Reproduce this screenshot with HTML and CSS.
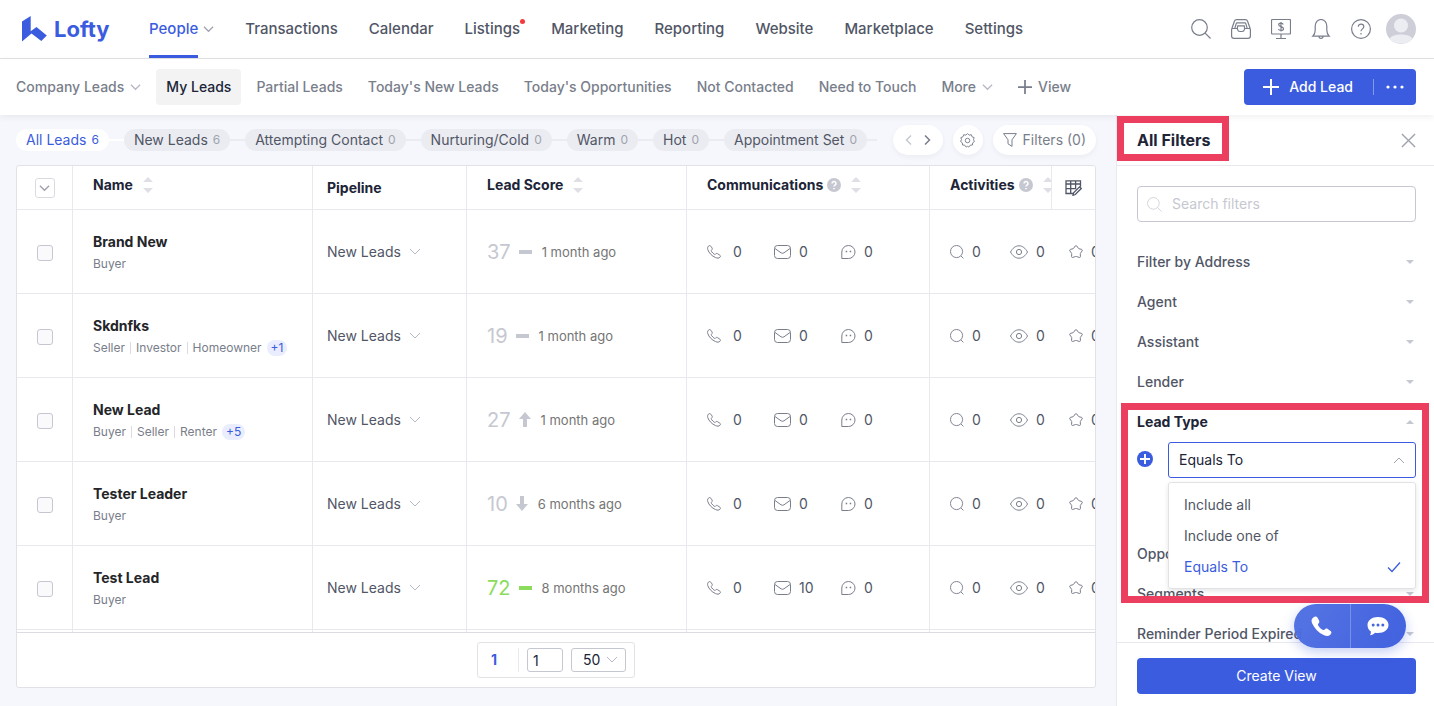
FILE: index.html
```html
<!DOCTYPE html>
<html lang="en">
<head>
    <meta charset="UTF-8">
    <meta name="viewport" content="width=device-width, initial-scale=1.0">
    <title>Lofty - My Leads</title>
    <link rel="stylesheet" href="styles.css">
</head>
<body>
    <!-- Icon sprite -->
    <svg class="sprite" aria-hidden="true">
        <symbol id="i-down" viewBox="0 0 12 8"><path d="M1 1.500l5 5 5-5"/></symbol>
        <symbol id="i-search" viewBox="0 0 20 20"><circle cx="8.500" cy="8.500" r="7.800"/><path d="M14.200 14.200l5.300 5.300"/></symbol>
        <symbol id="i-plus" viewBox="0 0 16 16"><path d="M8 0v16M0 8h16"/></symbol>
        <symbol id="i-close" viewBox="0 0 16 16"><path d="M1 1l14 14M15 1L1 15"/></symbol>
        <symbol id="i-sort" viewBox="0 0 10 16"><path d="M0 5l5-5 5 5zM0 11l5 5 5-5z"/></symbol>
        <symbol id="i-caret" viewBox="0 0 8 4"><path d="M0 0h8L4 4z"/></symbol>
        <symbol id="i-phone" viewBox="0 0 14 14"><path d="M1.400 1.200C2.300.3 3.200.4 3.800 1.200l1.200 1.700c.5.8.3 1.500-.3 2-.7.6-.5 1.200.2 2.100.8 1 1.700 1.800 2.300 2.200.6.4 1.100.2 1.500-.3.5-.6 1.200-.7 1.900-.2l2.100 1.400c.9.6 1 1.400.2 2.200-1 1-2.500 1.100-4.300.3C4.700 10.900 1.900 7.900.8 4.600.4 3.300.5 2.100 1.400 1.200z"/></symbol>
        <symbol id="i-mail" viewBox="0 0 17 14"><rect x=".5" y=".5" width="16" height="13" rx="3"/><path d="M1 3.500l6 4.300q1.500 1 3 0l6-4.300"/></symbol>
        <symbol id="i-chat" viewBox="0 0 15 14"><path d="M.8 13.500V7A6.600 6.500 0 1 1 7.400 13.500z"/><path d="M4.700 6.500h1.500M8.700 6.500h1.500" stroke-width="1.500"/></symbol>
        <symbol id="i-lens" viewBox="0 0 15 15"><circle cx="7" cy="7" r="6.500"/><path d="M11.800 11.800l2.600 2.600"/></symbol>
        <symbol id="i-eye" viewBox="0 0 18 14"><path d="M.5 7C2.600 3.200 5.500.8 9 .8S15.400 3.200 17.500 7C15.400 10.800 12.500 13.200 9 13.200S2.600 10.800.5 7z"/><circle cx="9" cy="7" r="2.600"/></symbol>
        <symbol id="i-star" viewBox="0 0 14 14"><path d="M6.300.9q.7-.6 1.400 0l1.700 2.400q.2.300.6.400l2.800.8q.9.400.4 1.300l-1.700 2.400q-.2.300-.2.700l.1 2.800q-.1.900-1 .8l-2.900-1q-.5-.1-1 0l-2.900 1q-.9.100-1-.8l.1-2.800q0-.4-.2-.7L.8 5.800q-.5-.9.4-1.300l2.800-.8q.4-.1.6-.4z"/></symbol>
        <symbol id="i-flat" viewBox="0 0 13 4"><path d="M0 0h13v4H0z"/></symbol>
        <symbol id="i-up" viewBox="0 0 12 15"><path d="M6 0l6 7H8v8H4V7H0z"/></symbol>
        <symbol id="i-dn" viewBox="0 0 12 15"><path d="M6 15l6-7H8V0H4v8H0z"/></symbol>
        <symbol id="i-help" viewBox="0 0 14 14"><circle cx="7" cy="7" r="7" fill="#c6c8d1"/><path d="M5 5.500a2 2 0 1 1 3 1.700c-.7.4-1 .7-1 1.300M7 9.900v1.300" fill="none" stroke="#fff" stroke-width="1.500"/></symbol>
    </svg>

    <header class="topbar">
        <a class="logo" href="#">
            <svg width="25" height="26" viewBox="0 0 25 26"><path d="M0 5.500L8.700 0v15.200L14.500 11l10.300 8.600L19.300 25 9.500 17.600 0 25.500z"/></svg>
            <span>Lofty</span>
        </a>
        <nav class="main-nav">
            <a class="active" href="#"><span class="label">People</span><svg class="line chev"><use href="#i-down"/></svg></a>
            <a href="#">Transactions</a>
            <a href="#">Calendar</a>
            <a class="has-dot" href="#">Listings</a>
            <a href="#">Marketing</a>
            <a href="#">Reporting</a>
            <a href="#">Website</a>
            <a href="#">Marketplace</a>
            <a href="#">Settings</a>
        </nav>
        <div class="tools">
            <button aria-label="Search"><svg class="line" viewBox="0 0 20 20"><use href="#i-search"/></svg></button>
            <button aria-label="Inbox"><svg class="line" viewBox="0 0 20 20"><path d="M.6 10.500q0-1 1-1h4q.9 0 1 .9.300 2.100 2.400 2.100h2q2.100 0 2.400-2.100.1-.9 1-.9h4q1 0 1 1V17q0 2.400-2.400 2.400H3Q.6 19.400.6 17zM.7 10L3.400 2.200Q4 .6 5.600.6h8.800q1.600 0 2.200 1.600L19.300 10M3.800 9.300l1.400-4.700q.2-.8 1-.8h7.600q.8 0 1 .8l1.400 4.700M6.300 9.300l.5-2.500h6.400l.5 2.500"/></svg></button>
            <button aria-label="Billing"><svg class="line" viewBox="0 0 20 20"><rect x=".5" y=".5" width="19" height="14.500" rx="1"/><path d="M10 15v4M5 19.500h10M12.300 5.500c-.4-1-1.200-1.400-2.300-1.400-1.300 0-2.300.6-2.300 1.700 0 2.500 4.800 1.200 4.800 3.900 0 1.200-1.100 1.800-2.500 1.800-1.300 0-2.200-.5-2.600-1.600M10 3v9.500"/></svg></button>
            <button aria-label="Notifications"><svg class="line" viewBox="0 0 20 20"><path d="M1.800 17.200c1.900-1.800 2.400-3.400 2.400-6.200V7a5.800 6.500 0 0 1 11.600 0v4c0 2.800.5 4.400 2.400 6.200zM8 17.200c0 2.800 4 2.800 4 0"/></svg></button>
            <button aria-label="Help"><svg class="line" viewBox="0 0 20 20"><circle cx="10" cy="10" r="9.400"/><path d="M7.300 7.800c0-3.600 5.500-3.500 5.500 0 0 2.100-2.800 2.100-2.800 4.500M10 14v1.500"/></svg></button>
            <button class="avatar" aria-label="Account"><svg viewBox="0 0 30 30"><circle cx="15" cy="15" r="15" fill="#cdced8"/><circle cx="15" cy="11.500" r="7" fill="#ecedf2"/><path d="M3.500 24.500C7 19 23 19 26.500 24.500A15 15 0 0 1 3.500 24.500z" fill="#ecedf2"/></svg></button>
        </div>
    </header>

    <div class="subbar">
        <nav class="views">
            <a href="#">Company Leads <svg class="line chev"><use href="#i-down"/></svg></a>
            <a class="current" href="#">My Leads</a>
            <a href="#">Partial Leads</a>
            <a href="#">Today's New Leads</a>
            <a href="#">Today's Opportunities</a>
            <a href="#">Not Contacted</a>
            <a href="#">Need to Touch</a>
            <a href="#">More <svg class="line chev"><use href="#i-down"/></svg></a>
            <a class="add-view" href="#"><svg class="line plus"><use href="#i-plus"/></svg>View</a>
        </nav>
        <div class="add-lead">
            <button class="add-main"><svg class="line plus"><use href="#i-plus"/></svg>Add Lead</button>
            <button class="add-more" aria-label="More actions"><svg width="18" height="4" viewBox="0 0 18 4"><circle cx="2" cy="2" r="1.600"/><circle cx="9" cy="2" r="1.600"/><circle cx="16" cy="2" r="1.600"/></svg></button>
        </div>
    </div>

    <div class="page">
        <main class="content">
            <div class="stage-bar">
                <ul class="stages">
                    <li><button class="stage selected">All Leads <span>6</span></button></li>
                    <li><button class="stage">New Leads <span>6</span></button></li>
                    <li><button class="stage">Attempting Contact <span>0</span></button></li>
                    <li><button class="stage">Nurturing/Cold <span>0</span></button></li>
                    <li><button class="stage">Warm <span>0</span></button></li>
                    <li><button class="stage">Hot <span>0</span></button></li>
                    <li><button class="stage">Appointment Set <span>0</span></button></li>
                </ul>
                <div class="bubble arrows">
                    <button class="prev" aria-label="Previous stages"><svg class="line" width="7" height="12" viewBox="0 0 7 12"><path d="M6 1.500L1.500 6 6 10.500"/></svg></button>
                    <button aria-label="Next stages"><svg class="line" width="7" height="12" viewBox="0 0 7 12"><path d="M1 1.500L5.500 6 1 10.500"/></svg></button>
                </div>
                <button class="bubble gear" aria-label="Stage settings">
                    <svg class="line" width="15" height="15" viewBox="0 0 16 16"><circle cx="8" cy="8" r="2.400"/><path d="M8 .6l1.700 1.700 2.400-.5.700 2.200 2.300.9-.7 2.200 1 2-1.900 1.400-.2 2.300-2.400.2L9.400 15 8 14.200 6.600 15l-1.500-2-2.400-.2-.2-2.300L.6 9.100l1-2-.7-2.200L3.200 4l.7-2.200 2.400.5z"/></svg>
                </button>
                <button class="bubble filters">
                    <svg class="line" width="14" height="14" viewBox="0 0 14 14"><path d="M.6.6h12.800L9 6.800v6.600l-4-2.600v-4z"/></svg>Filters (0)
                </button>
            </div>

            <section class="grid">
                <div class="grid-scroll">
                    <table class="leads">
                        <colgroup><col class="c-check"><col class="c-name"><col class="c-pipe"><col class="c-score"><col class="c-comm"><col class="c-act"></colgroup>
                        <thead>
                            <tr>
                                <th class="check"><button class="pick" aria-label="Select leads"><svg class="line chev"><use href="#i-down"/></svg></button></th>
                                <th class="sortable"><div class="head">Name <svg class="sort"><use href="#i-sort"/></svg></div></th>
                                <th class="pipe">Pipeline</th>
                                <th class="sortable"><div class="head">Lead Score <svg class="sort"><use href="#i-sort"/></svg></div></th>
                                <th class="sortable"><div class="head">Communications <svg class="help"><use href="#i-help"/></svg><svg class="sort"><use href="#i-sort"/></svg></div></th>
                                <th class="sortable"><div class="head">Activities <svg class="help"><use href="#i-help"/></svg><svg class="sort"><use href="#i-sort"/></svg></div></th>
                            </tr>
                        </thead>
                        <tbody>
                            <tr>
                                <td class="check"><input type="checkbox" aria-label="Select Brand New"></td>
                                <td class="lead"><a class="name" href="#">Brand New</a><div class="tags"><span>Buyer</span></div></td>
                                <td class="pipe"><select class="pipeline" aria-label="Pipeline of Brand New"><option>New Leads</option></select></td>
                                <td><div class="score"><b>37</b><svg class="flat"><use href="#i-flat"/></svg><span>1 month ago</span></div></td>
                                <td><div class="metrics comm"><span><svg class="line phone"><use href="#i-phone"/></svg>0</span><span><svg class="line mail"><use href="#i-mail"/></svg>0</span><span><svg class="line chat"><use href="#i-chat"/></svg>0</span></div></td>
                                <td><div class="metrics acts"><span><svg class="line lens"><use href="#i-lens"/></svg>0</span><span><svg class="line eye"><use href="#i-eye"/></svg>0</span><span><svg class="line star"><use href="#i-star"/></svg>0</span></div></td>
                            </tr>
                            <tr>
                                <td class="check"><input type="checkbox" aria-label="Select Skdnfks"></td>
                                <td class="lead"><a class="name" href="#">Skdnfks</a><div class="tags"><span>Seller</span><span>Investor</span><span>Homeowner</span><em>+1</em></div></td>
                                <td class="pipe"><select class="pipeline" aria-label="Pipeline of Skdnfks"><option>New Leads</option></select></td>
                                <td><div class="score"><b>19</b><svg class="flat"><use href="#i-flat"/></svg><span>1 month ago</span></div></td>
                                <td><div class="metrics comm"><span><svg class="line phone"><use href="#i-phone"/></svg>0</span><span><svg class="line mail"><use href="#i-mail"/></svg>0</span><span><svg class="line chat"><use href="#i-chat"/></svg>0</span></div></td>
                                <td><div class="metrics acts"><span><svg class="line lens"><use href="#i-lens"/></svg>0</span><span><svg class="line eye"><use href="#i-eye"/></svg>0</span><span><svg class="line star"><use href="#i-star"/></svg>0</span></div></td>
                            </tr>
                            <tr>
                                <td class="check"><input type="checkbox" aria-label="Select New Lead"></td>
                                <td class="lead"><a class="name" href="#">New Lead</a><div class="tags"><span>Buyer</span><span>Seller</span><span>Renter</span><em>+5</em></div></td>
                                <td class="pipe"><select class="pipeline" aria-label="Pipeline of New Lead"><option>New Leads</option></select></td>
                                <td><div class="score"><b>27</b><svg class="trend"><use href="#i-up"/></svg><span>1 month ago</span></div></td>
                                <td><div class="metrics comm"><span><svg class="line phone"><use href="#i-phone"/></svg>0</span><span><svg class="line mail"><use href="#i-mail"/></svg>0</span><span><svg class="line chat"><use href="#i-chat"/></svg>0</span></div></td>
                                <td><div class="metrics acts"><span><svg class="line lens"><use href="#i-lens"/></svg>0</span><span><svg class="line eye"><use href="#i-eye"/></svg>0</span><span><svg class="line star"><use href="#i-star"/></svg>0</span></div></td>
                            </tr>
                            <tr>
                                <td class="check"><input type="checkbox" aria-label="Select Tester Leader"></td>
                                <td class="lead"><a class="name" href="#">Tester Leader</a><div class="tags"><span>Buyer</span></div></td>
                                <td class="pipe"><select class="pipeline" aria-label="Pipeline of Tester Leader"><option>New Leads</option></select></td>
                                <td><div class="score"><b>10</b><svg class="trend"><use href="#i-dn"/></svg><span>6 months ago</span></div></td>
                                <td><div class="metrics comm"><span><svg class="line phone"><use href="#i-phone"/></svg>0</span><span><svg class="line mail"><use href="#i-mail"/></svg>0</span><span><svg class="line chat"><use href="#i-chat"/></svg>0</span></div></td>
                                <td><div class="metrics acts"><span><svg class="line lens"><use href="#i-lens"/></svg>0</span><span><svg class="line eye"><use href="#i-eye"/></svg>0</span><span><svg class="line star"><use href="#i-star"/></svg>0</span></div></td>
                            </tr>
                            <tr>
                                <td class="check"><input type="checkbox" aria-label="Select Test Lead"></td>
                                <td class="lead"><a class="name" href="#">Test Lead</a><div class="tags"><span>Buyer</span></div></td>
                                <td class="pipe"><select class="pipeline" aria-label="Pipeline of Test Lead"><option>New Leads</option></select></td>
                                <td><div class="score hot"><b>72</b><svg class="flat"><use href="#i-flat"/></svg><span>8 months ago</span></div></td>
                                <td><div class="metrics comm"><span><svg class="line phone"><use href="#i-phone"/></svg>0</span><span><svg class="line mail"><use href="#i-mail"/></svg>10</span><span><svg class="line chat"><use href="#i-chat"/></svg>0</span></div></td>
                                <td><div class="metrics acts"><span><svg class="line lens"><use href="#i-lens"/></svg>0</span><span><svg class="line eye"><use href="#i-eye"/></svg>0</span><span><svg class="line star"><use href="#i-star"/></svg>0</span></div></td>
                            </tr>
                            <tr><td></td><td></td><td></td><td></td><td></td><td></td></tr>
                        </tbody>
                    </table>
                    <button class="columns" aria-label="Edit columns">
                        <svg class="line" width="17" height="16" viewBox="0 0 17 16"><path d="M8 13.500H1V.8h14.500v6M1 4h14.500M1 8.700h10M5.700 .8v12.700M10.600.8v8.500M8 15.300l.6-2.500 6-6 1.700 1.700-6 6z"/></svg>
                    </button>
                </div>
                <footer class="pager">
                    <div class="pager-box">
                        <button class="page-no">1</button>
                        <input class="page-input" type="text" value="1" aria-label="Go to page">
                        <select class="page-size" aria-label="Leads per page"><option>50</option></select>
                    </div>
                </footer>
            </section>
        </main>

        <aside class="panel">
            <div class="panel-head">
                <h2>All Filters</h2>
                <button aria-label="Close filters"><svg class="line" width="15" height="15" viewBox="0 0 16 16"><use href="#i-close"/></svg></button>
            </div>
            <div class="panel-body">
                <label class="search">
                    <svg class="line" width="15" height="15" viewBox="0 0 20 20"><use href="#i-search"/></svg>
                    <input type="text" placeholder="Search filters" aria-label="Search filters">
                </label>
                <button class="filter">Filter by Address<svg class="caret"><use href="#i-caret"/></svg></button>
                <button class="filter">Agent<svg class="caret"><use href="#i-caret"/></svg></button>
                <button class="filter">Assistant<svg class="caret"><use href="#i-caret"/></svg></button>
                <button class="filter">Lender<svg class="caret"><use href="#i-caret"/></svg></button>
                <button class="filter open">Lead Type<svg class="caret"><use href="#i-caret"/></svg></button>
                <div class="filter-content">
                    <button class="add-rule" aria-label="Add rule"><svg class="line"><use href="#i-plus"/></svg></button>
                    <div class="rule">
                        <select class="rule-select" aria-label="Lead type rule">
                            <option>Include all</option>
                            <option>Include one of</option>
                            <option selected>Equals To</option>
                        </select>
                        <ul class="menu">
                            <li>Include all</li>
                            <li>Include one of</li>
                            <li class="chosen">Equals To<svg class="line" width="14" height="12" viewBox="0 0 14 12"><path d="M1 6.500l4 4L13 1.500"/></svg></li>
                        </ul>
                    </div>
                </div>
                <button class="filter">Opportunity<svg class="caret"><use href="#i-caret"/></svg></button>
                <button class="filter">Segments<svg class="caret"><use href="#i-caret"/></svg></button>
                <button class="filter">Reminder Period Expired<svg class="caret"><use href="#i-caret"/></svg></button>
            </div>
            <div class="panel-foot"><button>Create View</button></div>

            <div class="mark mark-title"></div>
            <div class="mark mark-type"></div>
            <div class="dock">
                <button aria-label="Call"><svg width="21" height="21" viewBox="0 0 21 21"><path d="M2 1.800C4 0 5.400-.1 6.400 1.600L8 4.600c.7 1.400.2 2.300-.7 3.200-.6.6-.4 1.300.4 2.400 1.300 1.800 2.600 2.900 3.900 3.600.9.500 1.500.2 2.100-.4.900-.9 1.900-1.100 3.100-.3l2.700 1.900c1.400 1.100 1.200 2.400-.4 3.900-1.500 1.400-3.600 1.600-6.500.2C7.500 16.800 3.500 12.300 1.200 7.500.1 5 .4 3.200 2 1.800z"/></svg></button>
                <button aria-label="Message"><svg width="22" height="19" viewBox="0 0 22 19"><path d="M11 0C17 0 21.500 3.500 21.500 8S17 16 11 16c-1.200 0-2 0-3-.3C6.600 17 5 18 3 18.300c.7-1 1-2.300.9-3.800C1.600 13 .5 10.500.5 8 .5 3.500 5 0 11 0z"/><g fill="#4765df"><circle cx="6.200" cy="8" r="1.500"/><circle cx="11" cy="8" r="1.500"/><circle cx="15.800" cy="8" r="1.500"/></g></svg></button>
            </div>
        </aside>
    </div>
</body>
</html>
```

FILE: styles.css
```css
:root {
    --primary: #3b5cde;
    --ink: #202437;
    --text: #515666;
    --muted: #797e8b;
    --faint: #a0a3af;
    --pale: #c6c8d1;
    --line: #e8e9ef;
    --mark: #ec3f60;
}

* {
    box-sizing: border-box;
}

body {
    margin: 0;
    height: 100vh;
    display: flex;
    flex-direction: column;
    overflow: hidden;
    font-family: Inter, "Liberation Sans", sans-serif;
    font-size: 14px;
    line-height: 20px;
    color: var(--text);
    background: #fff;
}

a {
    color: inherit;
    text-decoration: none;
}

button, input, select {
    font: inherit;
    color: inherit;
}

button {
    background: none;
    border: 0;
    padding: 0;
    cursor: pointer;
}

svg {
    flex: none;
    display: block;
    fill: currentColor;
}

.sprite {
    display: none;
}

.line {
    fill: none;
    stroke: currentColor;
}

.chev {
    width: 11px;
    height: 8px;
    color: #b5b8c4;
    stroke-width: 1.3;
}

.plus {
    width: 16px;
    height: 16px;
    stroke-width: 2;
}

/* Top bar */
.topbar {
    display: flex;
    flex: none;
    height: 59px;
    padding: 0 18px 0 22px;
    border-bottom: 1px solid #e1e2e6;
}

.logo {
    display: flex;
    align-items: center;
    gap: 7px;
    width: 127px;
    color: var(--primary);
    font-size: 22px;
    font-weight: 700;
}

.main-nav {
    display: flex;
    gap: 31px;
    font-size: 15px;
    font-weight: 500;
}

.main-nav a {
    display: flex;
    align-items: center;
    gap: 5px;
    height: 58px;
}

.main-nav .active {
    color: var(--primary);
}

.main-nav .chev {
    color: var(--faint);
}

.active .label {
    line-height: 52px;
    border-top: 3px solid transparent;
    border-bottom: 3px solid var(--primary);
}

.has-dot {
    position: relative;
}

.has-dot::after {
    content: "";
    position: absolute;
    top: 19px;
    right: -5px;
    width: 5px;
    height: 5px;
    border-radius: 50%;
    background: #f5393d;
}

.tools {
    display: flex;
    align-items: center;
    gap: 20px;
    margin-left: auto;
    color: var(--muted);
}

.tools svg {
    width: 20px;
    height: 20px;
    stroke-width: 1.2;
}

.tools .avatar {
    margin-left: -5px;
}

.tools .avatar svg {
    width: 30px;
    height: 30px;
}

/* Saved views */
.subbar {
    display: flex;
    flex: none;
    align-items: center;
    height: 56px;
    padding: 0 18px 0 6px;
    color: var(--muted);
    font-weight: 500;
    box-shadow: 0 2px 6px rgba(32, 36, 55, 0.07);
    z-index: 1;
}

.views {
    display: flex;
    gap: 5px;
}

.views a {
    display: flex;
    align-items: center;
    gap: 6px;
    height: 36px;
    padding: 0 10px;
    border-radius: 4px;
    white-space: nowrap;
}

.views .current {
    background: #f3f3f4;
    color: var(--ink);
}

.views .plus {
    width: 14px;
    height: 14px;
}

.add-lead {
    display: flex;
    align-items: center;
    margin-left: auto;
    height: 36px;
    border-radius: 4px;
    background: var(--primary);
    color: #fff;
}

.add-main {
    display: flex;
    align-items: center;
    gap: 10px;
    padding: 0 20px 0 19px;
}

.add-more {
    padding: 6px 12px;
    border-left: 1px solid #8298ea;
}

/* Stage pills */
.page {
    display: flex;
    flex: 1;
    min-height: 0;
}

.content {
    display: flex;
    flex: 1;
    flex-direction: column;
    min-width: 0;
    padding: 0 20px 18px 16px;
    background: #f6f7fc;
}

.stage-bar {
    display: flex;
    flex: none;
    align-items: center;
    gap: 10px;
    height: 50px;
}

.stages {
    display: flex;
    flex: 1;
    min-width: 0;
    margin: 0 6px 0 0;
    padding: 0;
    overflow: hidden;
    list-style: none;
}

.stages li {
    display: flex;
    flex: none;
    align-items: center;
}

.stages li + li::before, .stages li:last-child::after {
    content: "";
    width: 15px;
    height: 2px;
    background: #ebecf1;
}

.stages li:nth-child(2)::before {
    background: #fff;
}

.stage {
    display: flex;
    gap: 5px;
    height: 22px;
    padding: 1px 10px;
    border-radius: 11px;
    background: #ebecf1;
}

.stage span {
    color: var(--faint);
    font-size: 12px;
}

.stage.selected, .stage.selected span {
    background: #fff;
    color: var(--primary);
}

.bubble {
    display: flex;
    flex: none;
    align-items: center;
    justify-content: center;
    height: 30px;
    border-radius: 15px;
    background: #fff;
    color: var(--muted);
    box-shadow: 0 2px 5px rgba(32, 36, 55, 0.05);
}

.arrows {
    gap: 12px;
    width: 50px;
}

.arrows svg {
    stroke-width: 1.5;
}

.arrows .prev {
    color: var(--pale);
}

.gear {
    width: 30px;
}

.filters {
    gap: 6px;
    padding: 0 10px;
}

/* Leads table */
.grid {
    display: flex;
    flex: 1;
    flex-direction: column;
    min-height: 0;
    border: 1px solid #e1e2e6;
    border-radius: 3px;
    background: #fff;
    overflow: hidden;
}

.grid-scroll {
    position: relative;
    flex: 1;
    min-height: 0;
    overflow: hidden;
}

.leads {
    width: 1200px;
    table-layout: fixed;
    border-collapse: separate;
    border-spacing: 0;
}

.c-check { width: 56px; }
.c-name { width: 240px; }
.c-pipe { width: 154px; }
.c-score { width: 220px; }
.c-comm { width: 243px; }

.leads th, .leads td {
    padding: 0 0 0 20px;
    border-right: 1px solid var(--line);
    border-bottom: 1px solid var(--line);
    text-align: left;
}

.leads th {
    height: 44px;
    color: var(--ink);
    font-weight: 700;
}

.leads td {
    height: 84px;
}

.leads .check {
    padding: 0;
    text-align: center;
    line-height: 18px;
}

.leads .lead {
    padding-top: 2px;
}

.leads .pipe {
    padding-left: 14px;
}

.leads .sortable {
    padding-bottom: 6px;
}

.head {
    display: flex;
    align-items: center;
    gap: 10px;
}

.help {
    width: 14px;
    height: 14px;
    margin-left: -6px;
}

.sort {
    width: 10px;
    height: 16px;
    color: #dfe0e6;
}

.pick {
    display: inline-grid;
    place-items: center;
    width: 20px;
    height: 20px;
    border: 1px solid #dadbe2;
    border-radius: 3px;
    vertical-align: middle;
}

.pick .chev {
    color: var(--faint);
    stroke-width: 1.5;
}

.leads input {
    appearance: none;
    width: 16px;
    height: 16px;
    margin: 0;
    border: 1px solid var(--pale);
    border-radius: 3px;
    background: #fafafd;
    vertical-align: middle;
}

.name {
    color: #242529;
    font-weight: 700;
}

.tags {
    display: flex;
    align-items: center;
    margin-top: 2px;
    color: var(--muted);
    font-size: 12px;
}

.tags span + span {
    margin-left: 5px;
    padding-left: 5px;
    line-height: 12px;
    border-left: 1px solid #dadbe2;
}

.tags em {
    margin-left: 5px;
    padding: 0 4px;
    border-radius: 8px;
    line-height: 16px;
    font-style: normal;
    color: var(--primary);
    background: #e9edfd;
}

.pipeline, .page-size, .rule-select {
    appearance: none;
    border: 0;
    background: url("data:image/svg+xml,%3Csvg xmlns='http://www.w3.org/2000/svg' width='12' height='8'%3E%3Cpath d='M1 1l5 5 5-5' fill='none' stroke='%23b5b8c4'/%3E%3C/svg%3E") no-repeat right center;
}

.pipeline {
    padding: 0 20px 0 0;
}

.score {
    display: flex;
    align-items: center;
    gap: 8px;
    color: var(--pale);
}

.score b {
    font-size: 20px;
    font-weight: 400;
}

.score span {
    margin-left: 2px;
    color: #757575;
    font-size: 13px;
}

.score.hot {
    color: #8bdc5d;
}

.flat { width: 13px; height: 4px; }
.trend { width: 12px; height: 15px; }

.metrics {
    display: grid;
}

.metrics.comm {
    grid-template-columns: 67px 67px 60px;
}

.metrics.acts {
    grid-template-columns: 60px 59px 60px;
}

.metrics span {
    display: flex;
    align-items: center;
    gap: 8px;
}

.metrics svg {
    height: 14px;
    color: var(--muted);
}

.metrics .phone {
    width: 14px;
    margin-right: 4px;
}

.mail { width: 17px; }
.chat { width: 15px; }
.lens { width: 14px; }
.eye { width: 18px; }
.star { width: 14px; }

/* Stays over the right end of the header row */
.columns {
    position: absolute;
    top: 0;
    right: 0;
    display: grid;
    place-items: center;
    width: 44px;
    height: 43px;
    border-left: 1px solid var(--line);
    background: #fff;
}

.columns svg {
    stroke-width: 1.3;
}

.pager {
    display: flex;
    flex: none;
    justify-content: center;
    height: 55px;
    padding: 9px 0;
    border-top: 1px solid #dcdde2;
    color: var(--ink);
}

.pager-box {
    display: flex;
    align-items: center;
    gap: 8px;
    height: 36px;
    padding: 0 8px 0 0;
    border: 1px solid #e1e2e6;
    border-radius: 3px;
}

.page-no {
    width: 41px;
    height: 24px;
    padding-right: 8px;
    border-right: 1px solid var(--line);
    color: var(--primary);
    font-weight: 700;
}

.page-input, .page-size {
    height: 24px;
    border: 1px solid var(--pale);
    border-radius: 3px;
}

.page-input {
    width: 36px;
    padding: 0 5px;
}

.page-size {
    width: 55px;
    padding: 0 0 0 11px;
    background-position: right 7px center;
}

/* Filter panel */
.panel {
    position: relative;
    display: flex;
    flex: none;
    flex-direction: column;
    width: 318px;
    border-left: 1px solid var(--line);
    background: #fff;
}

.panel-head {
    display: flex;
    flex: none;
    align-items: center;
    justify-content: space-between;
    height: 51px;
    padding: 0 18px 0 20px;
    border-bottom: 1px solid var(--line);
    color: var(--faint);
}

.panel-head h2 {
    margin: 0;
    color: var(--ink);
    font-size: 16px;
    font-weight: 700;
}

.panel-head svg {
    stroke-width: 1.5;
}

.panel-body {
    flex: 1;
    min-height: 0;
    padding: 20px 18px 0 20px;
    overflow: hidden;
}

.search {
    display: flex;
    align-items: center;
    gap: 10px;
    height: 36px;
    margin-bottom: 20px;
    padding: 0 9px;
    border: 1px solid var(--pale);
    border-radius: 4px;
    color: var(--pale);
}

.search input {
    flex: 1;
    min-width: 0;
    padding: 0;
    border: 0;
    outline: 0;
}

.search input::placeholder {
    color: var(--pale);
}

.filter {
    display: flex;
    align-items: center;
    justify-content: space-between;
    width: 100%;
    height: 40px;
    padding-right: 2px;
    font-weight: 500;
}

.caret {
    width: 8px;
    height: 4px;
    color: var(--pale);
}

.filter.open {
    color: var(--ink);
    font-weight: 700;
}

.open .caret {
    transform: rotate(180deg);
}

.filter-content {
    display: flex;
    gap: 15px;
    height: 92px;
}

.add-rule {
    display: grid;
    place-items: center;
    width: 16px;
    height: 16px;
    margin-top: 9px;
    border-radius: 50%;
    background: var(--primary);
    color: #fff;
}

.add-rule svg {
    width: 10px;
    height: 10px;
    stroke-width: 3;
}

.rule {
    position: relative;
    flex: 1;
}

.rule-select {
    width: 100%;
    height: 36px;
    padding: 0 10px;
    border: 1px solid var(--primary);
    border-radius: 3px;
    color: var(--ink);
    background-image: url("data:image/svg+xml,%3Csvg xmlns='http://www.w3.org/2000/svg' width='12' height='8'%3E%3Cpath d='M1 7l5-5 5 5' fill='none' stroke='%23a0a3af'/%3E%3C/svg%3E");
    background-position: right 10px center;
}

.menu {
    position: absolute;
    top: 40px;
    left: 0;
    right: 0;
    z-index: 1;
    margin: 0;
    padding: 6px 0;
    border: 1px solid #e1e2e6;
    border-radius: 3px;
    background: #fff;
    box-shadow: 0 2px 5px rgba(0, 0, 0, 0.1);
    list-style: none;
}

.menu li {
    display: flex;
    align-items: center;
    justify-content: space-between;
    height: 31px;
    padding: 0 14px 0 15px;
}

.menu .chosen {
    color: var(--primary);
}

.menu svg {
    stroke-width: 1.3;
}

.panel-foot {
    flex: none;
    padding: 15px 18px 12px 20px;
    border-top: 1px solid var(--line);
    background: #fff;
}

.panel-foot button {
    display: block;
    width: 100%;
    height: 36px;
    border-radius: 4px;
    background: var(--primary);
    color: #fff;
}

/* Highlight frames, drawn over the panel */
.mark {
    position: absolute;
    z-index: 2;
    border: 7px solid var(--mark);
    pointer-events: none;
}

.mark-title {
    top: 1px;
    left: 0;
    width: 112px;
    height: 45px;
}

.mark-type {
    top: 288px;
    left: 4px;
    right: 5px;
    height: 200px;
}

.dock {
    position: absolute;
    right: 28px;
    bottom: 58px;
    z-index: 3;
    display: flex;
    width: 112px;
    height: 44px;
    border-radius: 22px;
    background: linear-gradient(120deg, rgba(80, 112, 226, 0.97), rgba(59, 92, 222, 0.97));
    box-shadow: 0 4px 12px rgba(59, 92, 222, 0.3);
    color: #fff;
}

.dock button {
    display: grid;
    flex: 1;
    place-items: center;
}

.dock button + button {
    border-left: 1px solid #7890e8;
}
```
